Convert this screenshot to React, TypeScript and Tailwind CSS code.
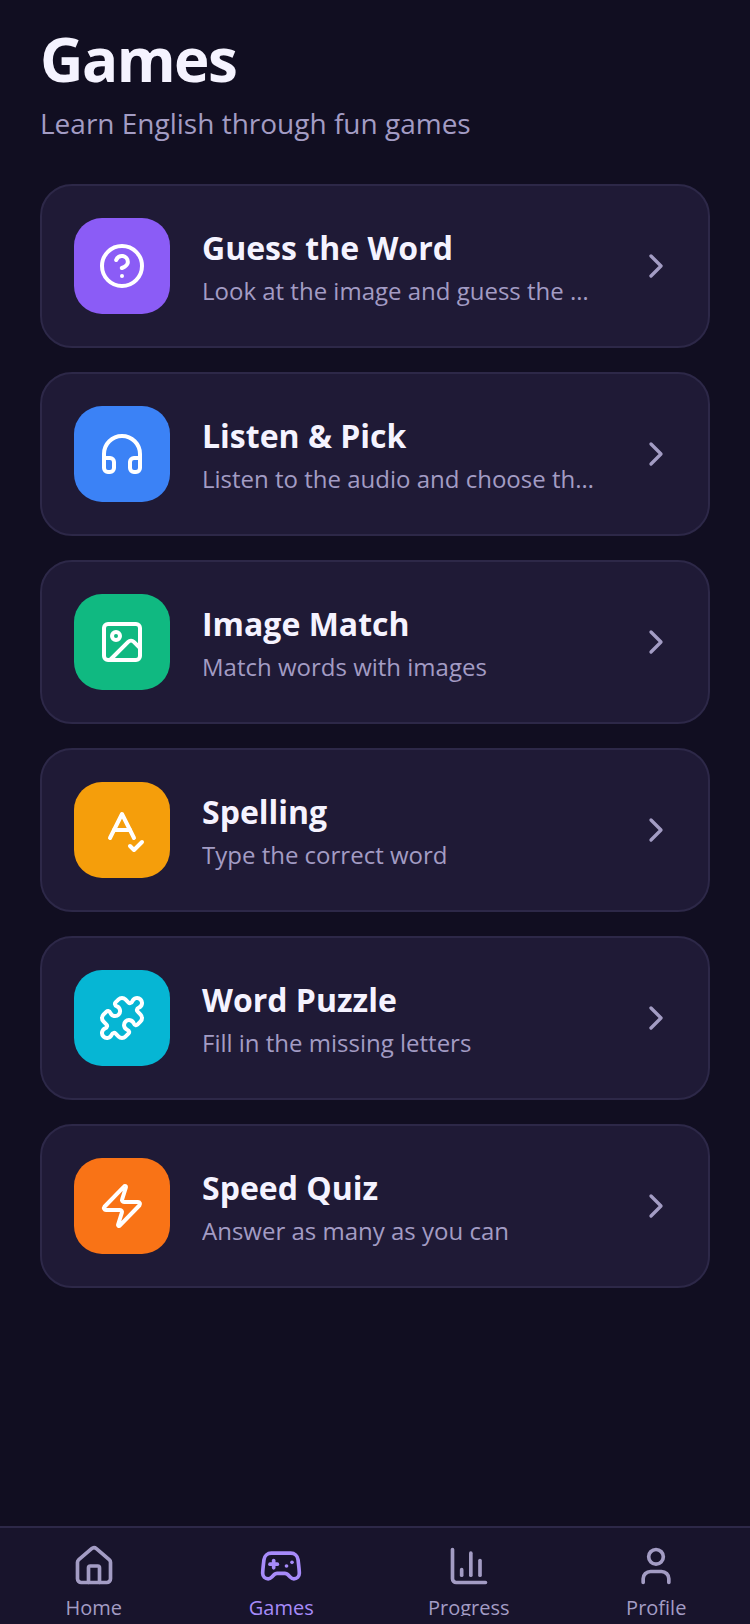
import React from 'react';
import { ChartColumn, ChevronRight, CircleHelp, Gamepad2, Headphones, House, Image, SpellCheck, User, Zap } from 'lucide-react';

// older lucide puzzle outline, the one in the package has moved its lobes
const PuzzleIcon = ({ size, color, strokeWidth }: { size: number; color: string; strokeWidth: number }) => (
  <svg width={size} height={size} viewBox="0 0 24 24" fill="none" stroke={color} strokeWidth={strokeWidth} strokeLinecap="round" strokeLinejoin="round">
    <path d="M19.439 7.85c-.049.322.059.648.289.878l1.568 1.568c.47.47.706 1.087.706 1.704s-.235 1.233-.706 1.704l-1.611 1.611a.98.98 0 0 1-.837.276c-.47-.07-.802-.48-.968-.925a2.501 2.501 0 1 0-3.214 3.214c.446.166.855.497.925.968a.979.979 0 0 1-.276.837l-1.61 1.61a2.404 2.404 0 0 1-1.705.707 2.402 2.402 0 0 1-1.704-.706l-1.568-1.568a1.026 1.026 0 0 0-.877-.29c-.493.074-.84.504-1.02.968a2.5 2.5 0 1 1-3.237-3.237c.464-.18.894-.527.967-1.02a1.026 1.026 0 0 0-.289-.877l-1.568-1.568A2.402 2.402 0 0 1 1.998 12c0-.617.236-1.234.706-1.704L4.23 8.77c.24-.24.581-.353.917-.303.515.077.877.528 1.073 1.01a2.5 2.5 0 1 0 3.259-3.259c-.482-.196-.933-.558-1.01-1.073-.05-.336.062-.676.303-.917l1.525-1.525A2.402 2.402 0 0 1 12 1.998c.617 0 1.234.236 1.704.706l1.568 1.568c.23.23.556.338.877.29.493-.074.84-.504 1.02-.968a2.5 2.5 0 1 1 3.237 3.237c-.464.18-.894.527-.967 1.02Z" />
  </svg>
);

const games = [
  { name: 'Guess the Word', desc: 'Look at the image and guess the word', bg: 'bg-[#8b5cf6]', icon: CircleHelp },
  { name: 'Listen & Pick', desc: 'Listen to the audio and choose the right word', bg: 'bg-[#3b82f6]', icon: Headphones },
  { name: 'Image Match', desc: 'Match words with images', bg: 'bg-[#10b981]', icon: Image },
  { name: 'Spelling', desc: 'Type the correct word', bg: 'bg-[#f59e0b]', icon: SpellCheck },
  { name: 'Word Puzzle', desc: 'Fill in the missing letters', bg: 'bg-[#06b6d4]', icon: PuzzleIcon },
  { name: 'Speed Quiz', desc: 'Answer as many as you can', bg: 'bg-[#f97316]', icon: Zap },
];

const tabs = [
  { label: 'Home', icon: House },
  { label: 'Games', icon: Gamepad2, active: true },
  { label: 'Progress', icon: ChartColumn },
  { label: 'Profile', icon: User },
];

export default function App() {
  return (
    <div className="flex h-[1624px] w-[750px] flex-col overflow-hidden bg-[#110e21] font-['Open_Sans',sans-serif]">
      <main className="flex-1 px-10 pt-[23px]">
        <h1 className="text-[60px] leading-[72px] font-bold tracking-[-1.5px] text-[#f5f3ff]">Games</h1>
        <p className="mt-2.5 text-[28px] leading-9 text-[#a39cc4]">Learn English through fun games</p>

        <div className="mt-[43px] flex flex-col gap-6">
          {games.map((game) => {
            const Icon = game.icon;
            return (
              <div key={game.name} className="flex h-[164px] items-center rounded-[32px] border-2 border-[#2d2848] bg-[#1f1a36] px-8">
                <div className={`flex h-24 w-24 shrink-0 items-center justify-center rounded-[28px] ${game.bg}`}>
                  <Icon size={48} color="#ffffff" strokeWidth={2} />
                </div>
                <div className="ml-8 min-w-0 flex-1 pt-[5px]">
                  <div className="text-[32px] leading-10 font-bold text-[#f5f3ff]">{game.name}</div>
                  <div className="mt-[5px] truncate text-[24px] leading-9 text-[#a39cc4]">{game.desc}</div>
                </div>
                <ChevronRight size={40} color="#a39cc4" strokeWidth={2} className="ml-[34px] shrink-0" />
              </div>
            );
          })}
        </div>
      </main>

      <nav className="flex h-[98px] border-t-2 border-[#2d2848] bg-[#18142c]">
        {tabs.map((tab) => {
          const Icon = tab.icon;
          return (
            <div key={tab.label} className="flex h-[88px] flex-1 flex-col items-center overflow-hidden pt-4">
              <Icon size={44} color={tab.active ? '#a78bfa' : '#a39cc4'} strokeWidth={2} className="shrink-0" />
              <span className={`mt-1.5 shrink-0 text-[20px] leading-7 ${tab.active ? 'text-[#a78bfa]' : 'text-[#a39cc4]'}`}>{tab.label}</span>
            </div>
          );
        })}
      </nav>
    </div>
  );
}
